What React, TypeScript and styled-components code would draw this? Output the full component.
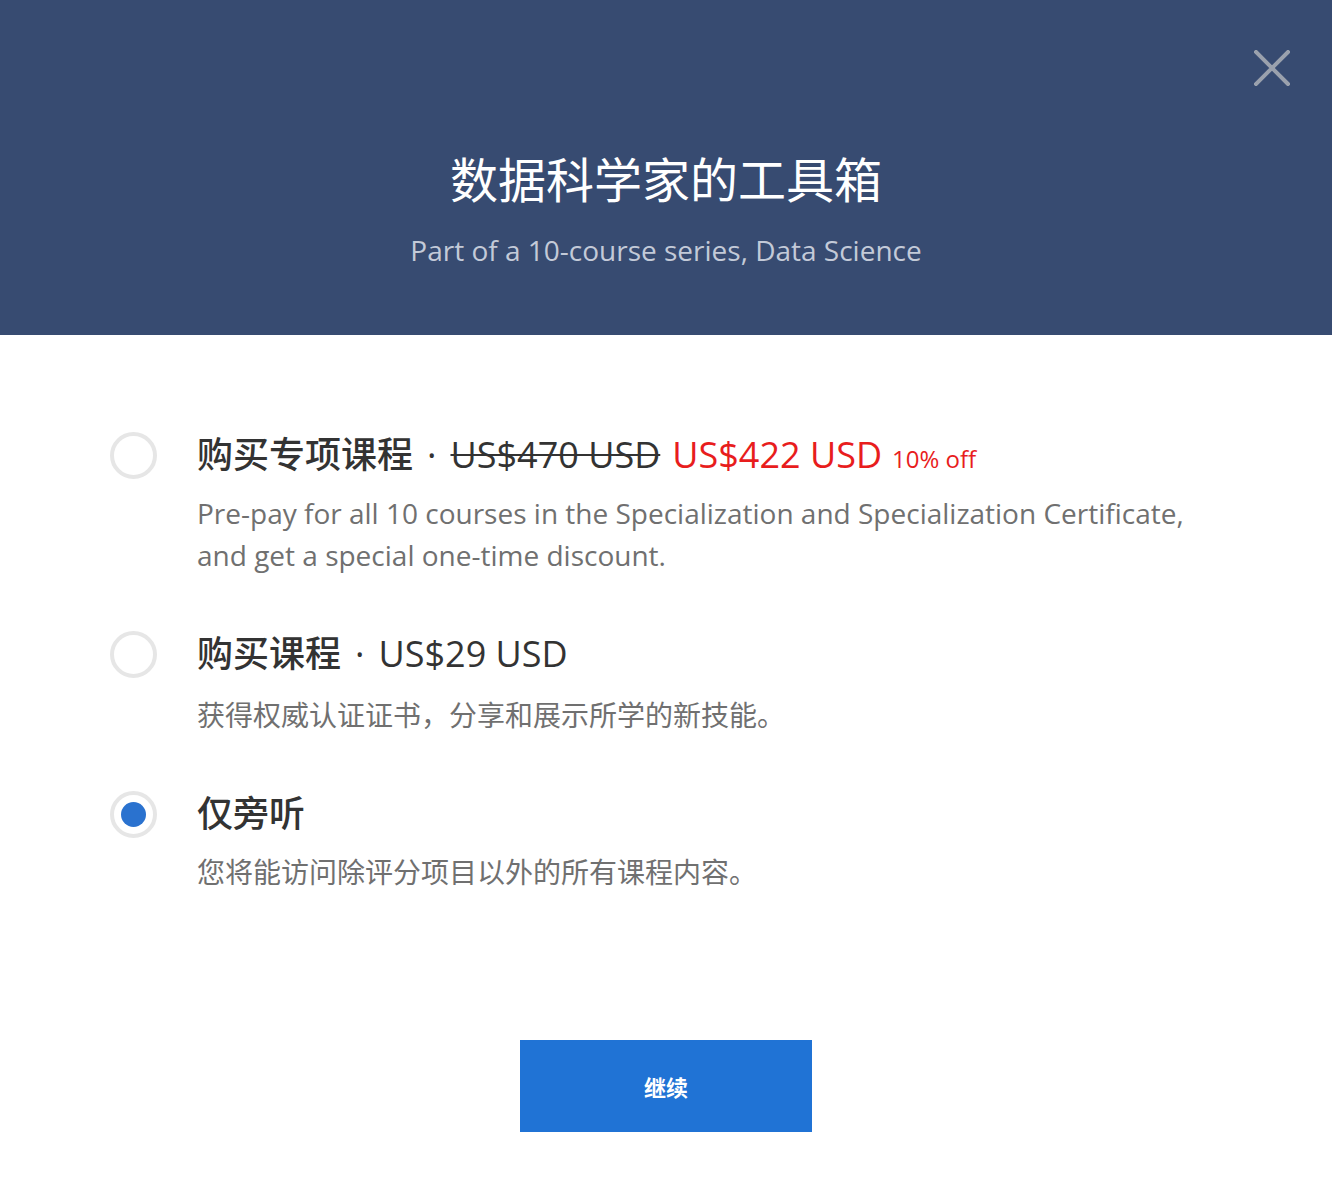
import styled, { createGlobalStyle } from "styled-components";

const Global = createGlobalStyle`
    body{
        margin:0;
        background:#fff;
        font-family:"Open Sans","Noto Sans CJK SC",sans-serif;
    }
`

type Option = {
    title: string
    price?: string
    oldPrice?: string
    off?: string
    desc: string
    cjk?: boolean
    selected?: boolean
}

const options: Option[] = [
    {
        title: "购买专项课程",
        oldPrice: "US$470 USD",
        price: "US$422 USD",
        off: "10% off",
        desc: "Pre-pay for all 10 courses in the Specialization and Specialization Certificate, and get a special one-time discount.",
    },
    {
        title: "购买课程",
        price: "US$29 USD",
        desc: "获得权威认证证书，分享和展示所学的新技能。",
        cjk: true,
    },
    {
        title: "仅旁听",
        desc: "您将能访问除评分项目以外的所有课程内容。",
        cjk: true,
        selected: true,
    },
]

export default function App() {
    return (
        <Page>
            <Global />
            <Header>
                <Close aria-label="close">
                    <svg width="36" height="36" viewBox="0 0 36 36">
                        <path d="M2 2L34 34M34 2L2 34" stroke="#9aa1ad" strokeWidth="4" strokeLinecap="square" />
                    </svg>
                </Close>
                <Title>数据科学家的工具箱</Title>
                <Subtitle>Part of a 10-course series, Data Science</Subtitle>
            </Header>
            <Body>
                <List>
                    {options.map((o) => (
                        <Row key={o.title}>
                            <Radio $on={!!o.selected} />
                            <div>
                                <OptTitle>
                                    <Cn>{o.title}</Cn>
                                    {(o.price || o.oldPrice) && <Dot>·</Dot>}
                                    {o.oldPrice && <Old>{o.oldPrice}</Old>}
                                    {o.price && <Price $red={!!o.oldPrice}>{o.price}</Price>}
                                    {o.off && <Off>{o.off}</Off>}
                                </OptTitle>
                                <Desc $cjk={!!o.cjk}>{o.desc}</Desc>
                            </div>
                        </Row>
                    ))}
                </List>
                <Button>继续</Button>
            </Body>
        </Page>
    )
}

const Page = styled.div`
    width:1332px;
    min-height:1196px;
    background:#fff;
`

const Header = styled.div`
    position:relative;
    height:335px;
    background:#374b71;
    display:flex;
    flex-direction:column;
    align-items:center;
    padding-top:145px;
    box-sizing:border-box;
`

const Close = styled.button`
    position:absolute;
    top:50px;
    right:42px;
    width:36px;
    height:36px;
    padding:0;
    border:none;
    background:none;
    cursor:pointer;
`

const Title = styled.h1`
    margin:0;
    font-family:"Noto Sans CJK SC",sans-serif;
    font-weight:400;
    font-size:48px;
    line-height:64px;
    color:#fff;
`

const Subtitle = styled.div`
    margin-top:21px;
    font-size:28px;
    line-height:40px;
    color:#c3cad8;
`

const Body = styled.div`
    display:flex;
    flex-direction:column;
    align-items:center;
    padding:93px 0 65px;
`

const List = styled.div`
    align-self:stretch;
    padding:0 140px 0 110px;
    display:flex;
    flex-direction:column;
    gap:51px;
`

const Row = styled.div`
    display:flex;
    align-items:flex-start;
    gap:40px;
`

const Radio = styled.div<{ $on: boolean }>`
    flex:none;
    width:47px;
    height:47px;
    margin-top:4px;
    border-radius:50%;
    border:4px solid #e6e6e6;
    box-sizing:border-box;
    display:flex;
    align-items:center;
    justify-content:center;
    &::after{
        content:"";
        display:${p => p.$on ? "block" : "none"};
        width:25px;
        height:25px;
        border-radius:50%;
        background:#2a72cf;
    }
`

const OptTitle = styled.div`
    display:flex;
    align-items:baseline;
    font-size:36px;
    line-height:48px;
    color:#333;
    white-space:nowrap;
`

const Cn = styled.span`
    font-family:"Noto Sans CJK SC",sans-serif;
    font-weight:500;
`

const Dot = styled.span`
    margin:0 14px;
`

const Old = styled.span`
    text-decoration:line-through;
    text-decoration-thickness:2px;
    margin-right:12px;
`

const Price = styled.span<{ $red: boolean }>`
    color:${p => p.$red ? "#e81d1d" : "#333"};
`

const Off = styled.span`
    margin-left:10px;
    font-size:24px;
    color:#e81d1d;
`

const Desc = styled.p<{ $cjk: boolean }>`
    margin:${p => p.$cjk ? "16px" : "9px"} 0 0;
    font-size:28px;
    line-height:42px;
    color:#707070;
`

const Button = styled.button`
    margin-top:147px;
    width:292px;
    height:92px;
    border:none;
    background:#2073d5;
    color:#fff;
    font-family:"Noto Sans CJK SC",sans-serif;
    font-weight:700;
    font-size:22px;
    cursor:pointer;
`
